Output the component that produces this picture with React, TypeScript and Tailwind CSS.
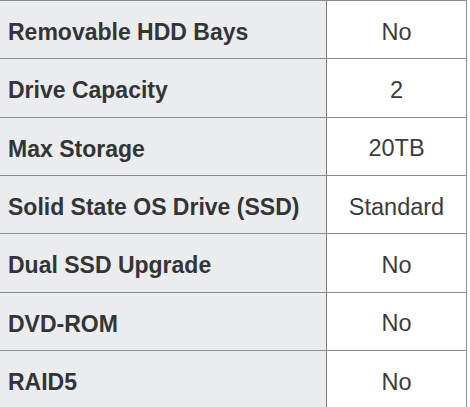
import React from 'react'

type Spec = { label: string; value: string }

const specs: Spec[] = [
  { label: 'Removable HDD Bays', value: 'No' },
  { label: 'Drive Capacity', value: '2' },
  { label: 'Max Storage', value: '20TB' },
  { label: 'Solid State OS Drive (SSD)', value: 'Standard' },
  { label: 'Dual SSD Upgrade', value: 'No' },
  { label: 'DVD-ROM', value: 'No' },
  { label: 'RAID5', value: 'No' },
]

export default function App() {
  return (
    <div className="w-[470px] h-[407px] overflow-hidden bg-white" style={{ fontFamily: '"Liberation Sans", Arial, sans-serif' }}>
      <div className="w-[467px] border-t border-[#8c8c8c]">
        {specs.map(s => (
          <div key={s.label} className="flex h-[58.33px] border-b border-[#8c8c8c]">
            <div className="w-[327px] shrink-0 flex items-center pl-[8px] pt-[5px] bg-[#ebecee] border-r border-[#7a7a7a] text-[23px] font-bold text-[#333436]">
              {s.label}
            </div>
            <div className="flex-1 flex items-center justify-center pt-[5px] border-r border-[#8c8c8c] text-[23.5px] text-[#3b3b3b]">
              {s.value}
            </div>
          </div>
        ))}
      </div>
    </div>
  )
}
